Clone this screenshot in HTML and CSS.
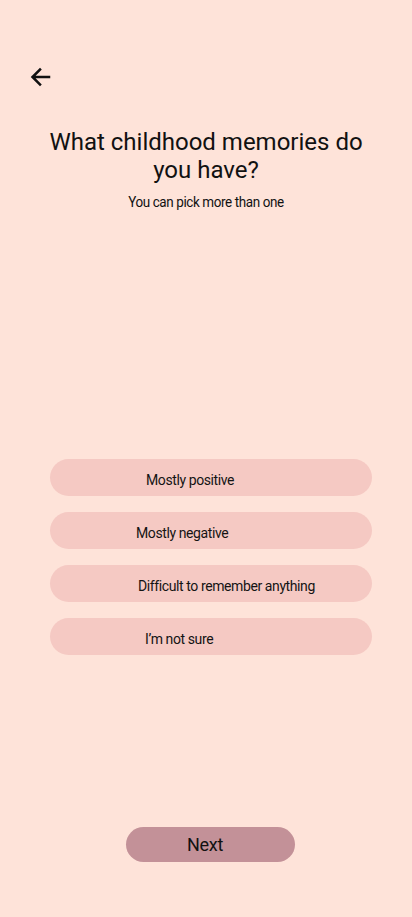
FILE: index.html
```html
<!DOCTYPE html>
<html>
<head>
<meta charset="utf-8">
<link rel="stylesheet" href="styles.css">
</head>
<body>
<div class="screen">
  <header class="top">
    <button class="back" aria-label="Back">
      <svg width="24" height="24" viewBox="0 0 24 24"><path d="M21 12H5M12 4.5L4.5 12 12 19.5" fill="none" stroke="#111" stroke-width="2.5" stroke-linecap="square"/></svg>
    </button>
  </header>
  <h1 class="title">What childhood memories do you have?</h1>
  <p class="subtitle">You can pick more than one</p>
  <div class="options">
    <div class="option opt-pos">Mostly positive</div>
    <div class="option opt-neg">Mostly negative</div>
    <div class="option opt-diff">Difficult to remember anything</div>
    <div class="option opt-unsure">I’m not sure</div>
  </div>
  <div class="footer">
    <button class="next">Next</button>
  </div>
</div>
</body>
</html>
```
FILE: styles.css
```css
html, body {
  margin: 0;
  padding: 0;
  background: #fee3d9;
}
.screen {
  width: 412px;
  height: 917px;
  display: flex;
  flex-direction: column;
  font-family: Roboto, "Liberation Sans", sans-serif;
  color: #111;
}
.top {
  padding: 65px 0 0 28px;
  height: 24px;
}
.back {
  border: 0;
  background: none;
  padding: 0;
  width: 24px;
  height: 24px;
  display: block;
}
.title {
  margin: 39px 40px 0;
  font-size: 24px;
  font-weight: 400;
  line-height: 28px;
  text-align: center;
}
.subtitle {
  margin: 9px 0 0;
  font-size: 14px;
  line-height: 18px;
  text-align: center;
  letter-spacing: -0.4px;
  transform: scaleX(0.96);
}
.options {
  margin: 248px 40px 0 50px;
  display: flex;
  flex-direction: column;
  gap: 16px;
}
.option {
  height: 37px;
  box-sizing: border-box;
  padding-top: 3px;
  border-radius: 19px;
  background: #f5c9c3;
  font-size: 14px;
  line-height: 37px;
  letter-spacing: -0.4px;
  color: #141414;
}
.opt-pos { padding-left: 96px; }
.opt-neg { padding-left: 86px; }
.opt-diff { padding-left: 88px; }
.opt-unsure { padding-left: 95px; }
.footer {
  margin-top: auto;
  padding: 0 0 55px 8px;
  display: flex;
  justify-content: center;
}
.next {
  width: 169px;
  height: 35px;
  border: 0;
  border-radius: 18px;
  background: #c39198;
  font-family: Roboto, "Liberation Sans", sans-serif;
  font-size: 18px;
  letter-spacing: -0.3px;
  color: #111;
  padding: 0 10px 0 0;
}
```
